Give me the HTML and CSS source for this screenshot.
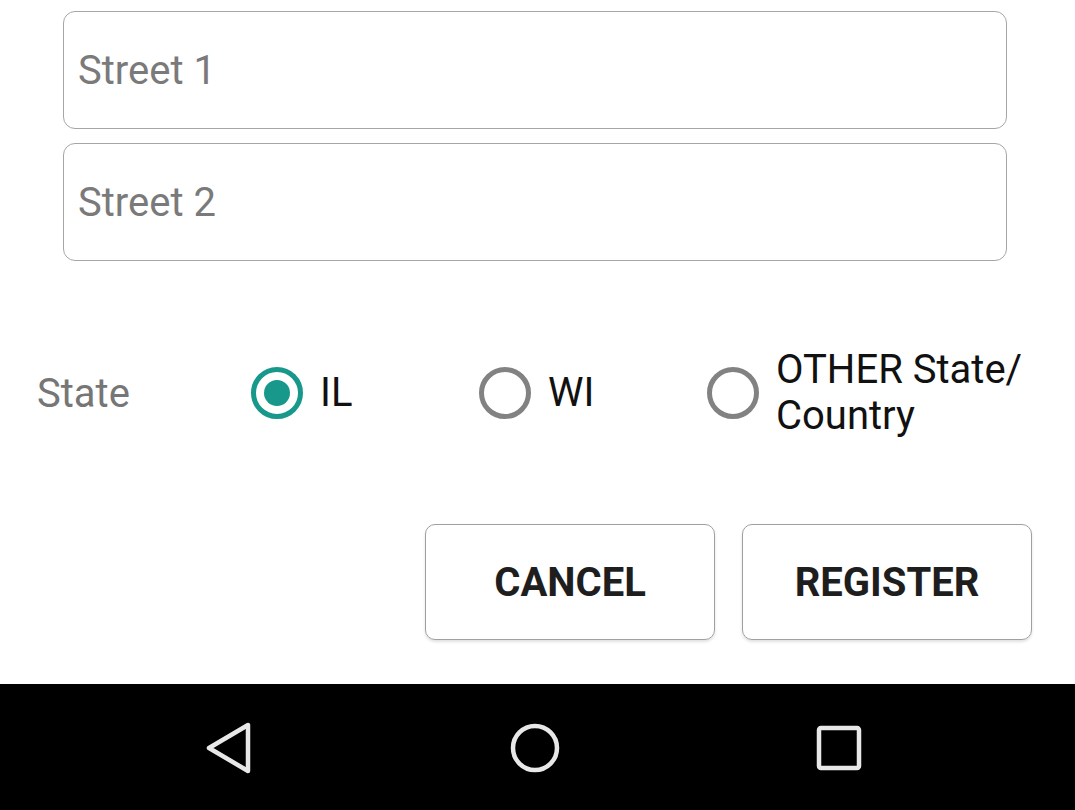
FILE: index.html
```html
<!DOCTYPE html>
<html>
<head>
<meta charset="utf-8">
<link rel="stylesheet" href="styles.css">
</head>
<body>
<div class="screen">
  <div class="form">
    <div class="field"><span class="placeholder">Street 1</span></div>
    <div class="field"><span class="placeholder">Street 2</span></div>
    <div class="state-row">
      <div class="state-label">State</div>
      <div class="radio-group">
        <span class="radio checked"></span>
        <span class="radio-text">IL</span>
      </div>
      <div class="radio-group">
        <span class="radio"></span>
        <span class="radio-text">WI</span>
      </div>
      <div class="radio-group">
        <span class="radio"></span>
        <span class="radio-text">OTHER State/<br>Country</span>
      </div>
    </div>
    <div class="buttons">
      <div class="btn">CANCEL</div>
      <div class="btn">REGISTER</div>
    </div>
  </div>
  <div class="navbar">
    <svg class="nav-icon" width="60" height="60" viewBox="0 0 60 60">
      <path d="M50 7 L50 53 L11 30 Z" fill="none" stroke="#e8e8e8" stroke-width="4.5" stroke-linejoin="round"/>
    </svg>
    <svg class="nav-icon" width="60" height="60" viewBox="0 0 60 60">
      <circle cx="30" cy="30" r="22" fill="none" stroke="#e8e8e8" stroke-width="4.5"/>
    </svg>
    <svg class="nav-icon" width="60" height="60" viewBox="0 0 60 60">
      <rect x="10" y="10" width="40" height="40" rx="2" fill="none" stroke="#e8e8e8" stroke-width="4.5"/>
    </svg>
  </div>
</div>
</body>
</html>
```

FILE: styles.css
```css
* { box-sizing: border-box; }
html, body { margin: 0; padding: 0; background: #ffffff; }
body { font-family: Roboto, "Noto Sans", sans-serif; }
.screen { width: 1075px; height: 810px; display: flex; flex-direction: column; }
.form { height: 684px; padding-top: 11px; display: flex; flex-direction: column; }
.field {
  margin-left: 63px;
  width: 944px;
  height: 118px;
  border: 1.5px solid #a6a6a6;
  border-radius: 12px;
  display: flex;
  align-items: center;
  padding-left: 14px;
  margin-bottom: 14px;
}
.placeholder { font-size: 40px; color: #7a7a7a; }
.state-row {
  margin-top: 63px;
  height: 110px;
  display: flex;
  align-items: center;
}
.state-label { width: 251px; padding-left: 37px; font-size: 40px; color: #767676; }
.radio-group { width: 228px; display: flex; align-items: center; }
.radio {
  flex: none;
  width: 52px;
  height: 52px;
  border-radius: 50%;
  border: 5px solid #828282;
  margin-right: 17px;
  position: relative;
}
.radio.checked { border-color: #17988a; }
.radio.checked::after {
  content: "";
  position: absolute;
  left: 8px; top: 8px;
  width: 26px; height: 26px;
  border-radius: 50%;
  background: #17988a;
}
.radio-text { font-size: 40px; color: #111; line-height: 46px; white-space: nowrap; }
.buttons {
  margin-top: 76px;
  display: flex;
  justify-content: flex-end;
  gap: 27px;
  padding-right: 43px;
}
.btn {
  width: 290px;
  height: 116px;
  border: 1.5px solid #a0a0a0;
  border-radius: 10px;
  display: flex;
  align-items: center;
  justify-content: center;
  font-size: 40px;
  font-weight: 700;
  color: #1e1e1e;
  box-shadow: 0 2px 3px rgba(0,0,0,0.12);
}
.navbar {
  flex: 1;
  background: #000;
  display: flex;
  align-items: center;
  padding-top: 2px;
}
.nav-icon:nth-child(1) { margin-left: 198px; }
.nav-icon:nth-child(2) { margin-left: 247px; }
.nav-icon:nth-child(3) { margin-left: 244px; }
```
